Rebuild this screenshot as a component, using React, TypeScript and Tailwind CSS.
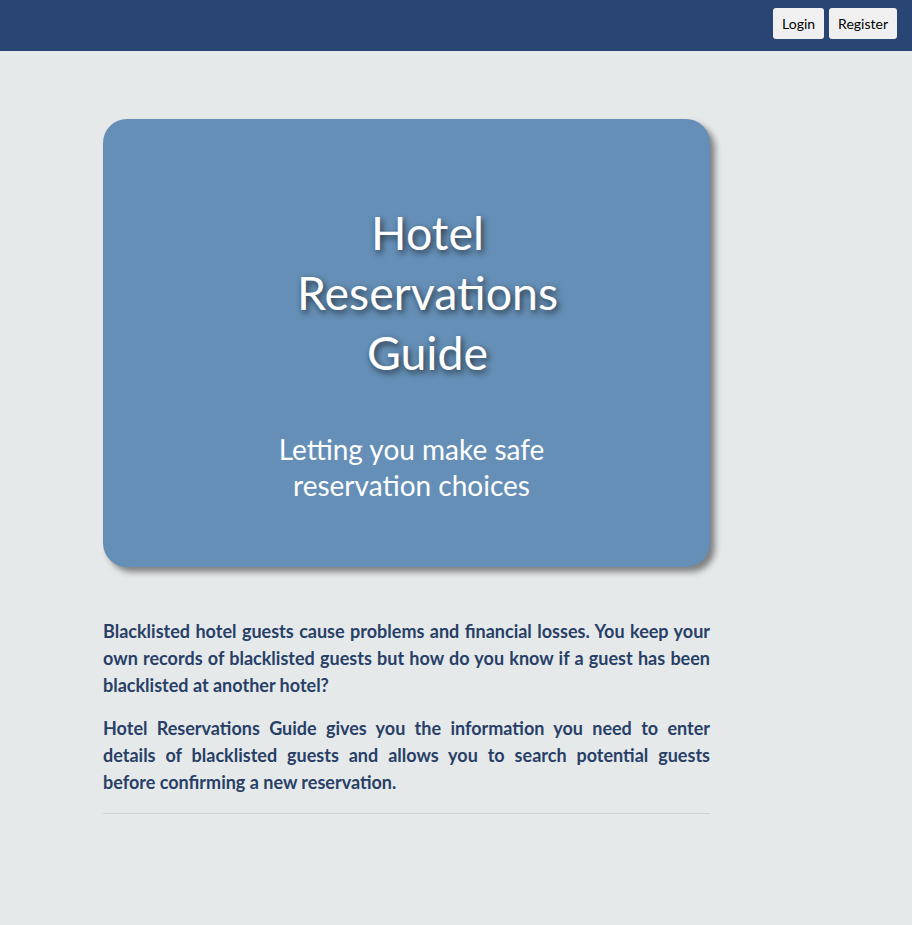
import React from "react";

export default function App() {
  return (
    <div className="min-h-[925px] bg-[#e6e9ea]" style={{ fontFamily: "Lato, 'Open Sans', sans-serif" }}>
      <header className="flex h-[51px] items-start justify-end gap-[5px] bg-[#284574] pr-[15px] pt-[8px]">
        <button className="h-[31px] rounded-[3px] bg-[#f0f0f0] px-[9px] text-[14px] font-normal text-black">Login</button>
        <button className="h-[31px] rounded-[3px] bg-[#f0f0f0] px-[9px] text-[14px] font-normal text-black">Register</button>
      </header>
      <main className="ml-[103px] w-[607px] pt-[68px]">
        <div className="flex h-[448px] flex-col rounded-[24px] bg-[#658fb6] shadow-[5px_5px_6px_rgba(0,0,0,0.45)]">
          <h1
            className="mt-[83px] pl-[42px] text-center text-[46.5px] leading-[60px] text-white"
            style={{ textShadow: "2px 3px 6px rgba(0,0,0,0.65)" }}
          >
            Hotel
            <br />
            Reservations
            <br />
            Guide
          </h1>
          <p className="mt-[49px] pl-[10px] text-center text-[28px] leading-[36px] text-white">
            Letting you make safe
            <br />
            reservation choices
          </p>
        </div>
        <div className="mt-[51px] text-justify text-[18px] font-bold leading-[27px] text-[#283f67]">
          <p>
            Blacklisted hotel guests cause problems and financial losses. You keep your own records of blacklisted guests but how do you know if a guest has been blacklisted at another hotel?
          </p>
          <p className="mt-[16px]">
            Hotel Reservations Guide gives you the information you need to enter details of blacklisted guests and allows you to search potential guests before confirming a new reservation.
          </p>
        </div>
        <hr className="mt-[17px] border-t border-[#cfd3d6]" />
      </main>
    </div>
  );
}
